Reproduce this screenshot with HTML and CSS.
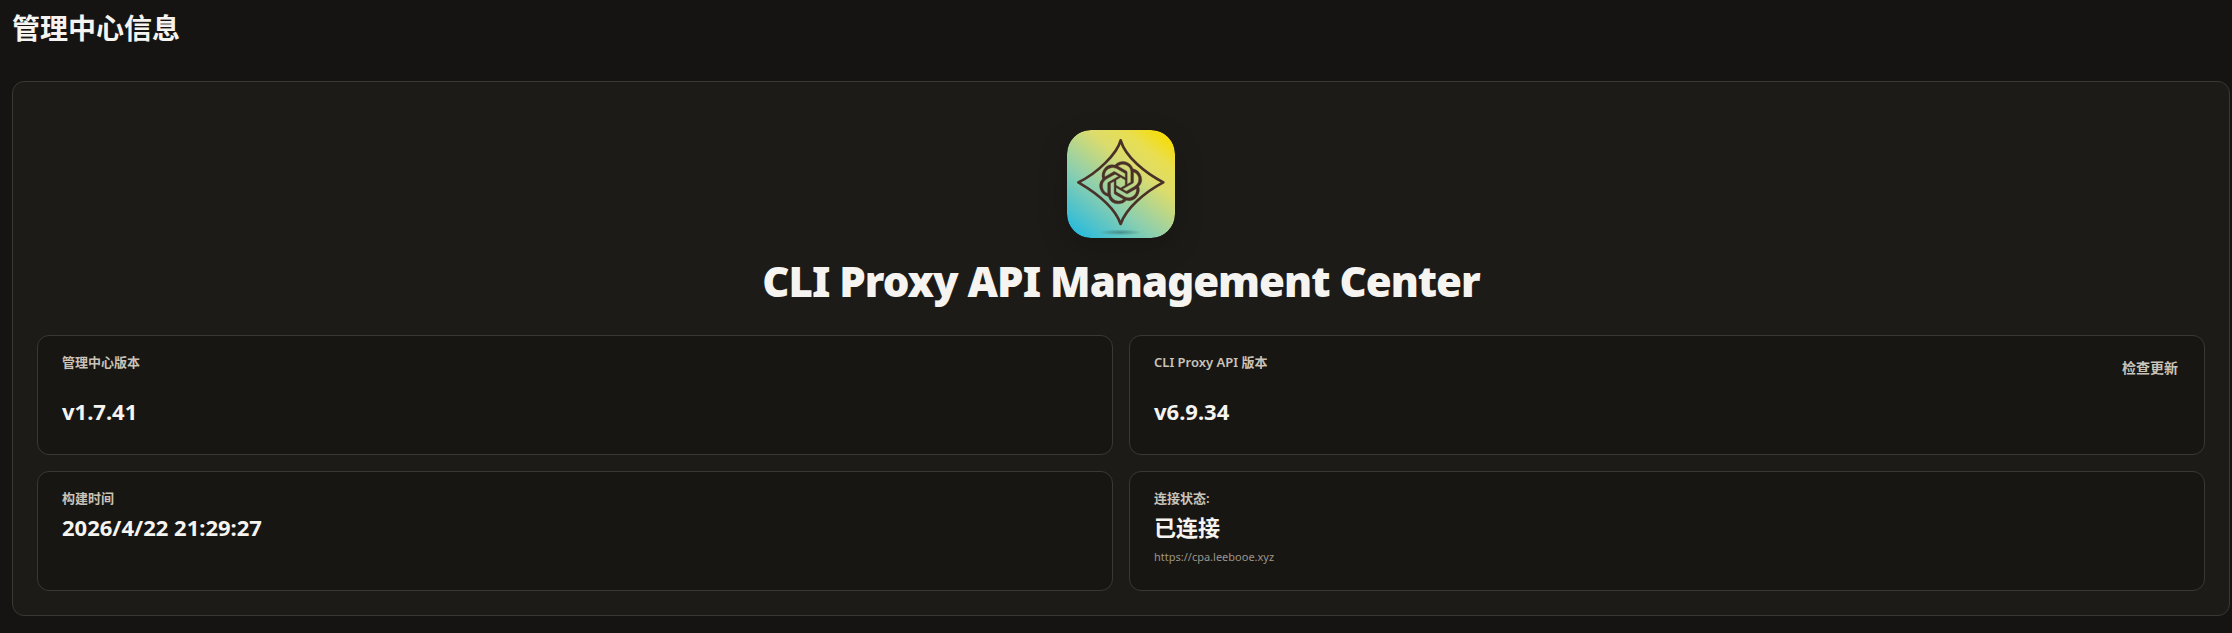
FILE: index.html
```
<!DOCTYPE html>
<html lang="zh-CN">
<head>
    <meta charset="UTF-8">
    <meta name="viewport" content="width=device-width, initial-scale=1.0">
    <title>CLI Proxy API Management Center</title>
    <link rel="stylesheet" href="styles.css">
</head>
<body>
    <main class="page">
        <h1 class="page-title">管理中心信息</h1>

        <section class="about-card">
            <div class="hero">
                <svg class="logo" viewBox="0 0 324 324" aria-hidden="true">
                    <defs>
                        <linearGradient id="bg" x1="0.1" y1="1" x2="0.9" y2="0">
                            <stop offset="0.02" stop-color="#2bbbdc"/>
                            <stop offset="0.36" stop-color="#8dcfae"/>
                            <stop offset="0.66" stop-color="#dcdc6c"/>
                            <stop offset="0.82" stop-color="#e8de50"/>
                            <stop offset="0.96" stop-color="#f5dd0e"/>
                        </linearGradient>
                        <radialGradient id="ground">
                            <stop offset="0" stop-color="#3b7a78" stop-opacity="0.75"/>
                            <stop offset="1" stop-color="#3b7a78" stop-opacity="0"/>
                        </radialGradient>
                    </defs>
                    <rect width="324" height="324" rx="72" fill="url(#bg)"/>
                    <ellipse cx="160" cy="307" rx="66" ry="9" fill="url(#ground)"/>
                    <path d="M161 31C150 72 90 130 34 157C90 190 145 235 161 282C177 235 235 185 289 157C235 130 175 80 161 31Z" fill="none" stroke="#4a3128" stroke-width="8" stroke-linejoin="round"/>
                    <g transform="translate(161 158) scale(-5.3 5.3) translate(-12 -12)">
                        <path fill="#4a3128" stroke="#4a3128" stroke-width="0.2" d="M22.2819 9.8211a5.9847 5.9847 0 0 0-.5157-4.9108 6.0462 6.0462 0 0 0-6.5098-2.9A6.0651 6.0651 0 0 0 4.9807 4.1818a5.9847 5.9847 0 0 0-3.9977 2.9 6.0462 6.0462 0 0 0 .7427 7.0966 5.98 5.98 0 0 0 .511 4.9107 6.051 6.051 0 0 0 6.5146 2.9001A5.9847 5.9847 0 0 0 13.2599 24a6.0557 6.0557 0 0 0 5.7718-4.2058 5.9894 5.9894 0 0 0 3.9977-2.9001 6.0557 6.0557 0 0 0-.7475-7.0729zm-9.022 12.6081a4.4755 4.4755 0 0 1-2.8764-1.0408l.1419-.0804 4.7783-2.7582a.7948.7948 0 0 0 .3927-.6813v-6.7369l2.02 1.1686a.071.071 0 0 1 .038.052v5.5826a4.504 4.504 0 0 1-4.4945 4.4944zm-9.6607-4.1254a4.4708 4.4708 0 0 1-.5346-3.0137l.142.0852 4.783 2.7582a.7712.7712 0 0 0 .7806 0l5.8428-3.3685v2.3324a.0804.0804 0 0 1-.0332.0615L9.74 19.9502a4.4992 4.4992 0 0 1-6.1408-1.6464zM2.3408 7.8956a4.485 4.485 0 0 1 2.3655-1.9728V11.6a.7664.7664 0 0 0 .3879.6765l5.8144 3.3543-2.0201 1.1685a.0757.0757 0 0 1-.071 0l-4.8303-2.7865A4.504 4.504 0 0 1 2.3408 7.872zm16.5963 3.8558L13.1038 8.364 15.1192 7.2a.0757.0757 0 0 1 .071 0l4.8303 2.7913a4.4944 4.4944 0 0 1-.6765 8.1042v-5.6772a.79.79 0 0 0-.407-.667zm2.0107-3.0231l-.142-.0852-4.7735-2.7818a.7759.7759 0 0 0-.7854 0L9.409 9.2297V6.8974a.0662.0662 0 0 1 .0284-.0615l4.8303-2.7866a4.4992 4.4992 0 0 1 6.6802 4.66zM8.3065 12.863l-2.02-1.1638a.0804.0804 0 0 1-.038-.0567V6.0742a4.4992 4.4992 0 0 1 7.3757-3.4537l-.142.0805L8.704 5.459a.7948.7948 0 0 0-.3927.6813zm1.0976-2.3654l2.602-1.4998 2.6069 1.4998v2.9994l-2.5974 1.4997-2.6067-1.4997Z"/>
                    </g>
                </svg>
                <h2 class="hero-title">CLI Proxy API Management Center</h2>
            </div>

            <div class="info-grid">
                <div class="tile">
                    <div class="tile-head">
                        <span class="tile-label">管理中心版本</span>
                    </div>
                    <div class="tile-value">v1.7.41</div>
                </div>
                <div class="tile">
                    <div class="tile-head">
                        <span class="tile-label">CLI Proxy API 版本</span>
                        <button type="button" class="btn-ghost">检查更新</button>
                    </div>
                    <div class="tile-value">v6.9.34</div>
                </div>
                <div class="tile">
                    <div class="tile-label">构建时间</div>
                    <div class="tile-value">2026/4/22 21:29:27</div>
                </div>
                <div class="tile">
                    <div class="tile-label">连接状态:</div>
                    <div class="tile-value">已连接</div>
                    <div class="tile-sub">https://cpa.leebooe.xyz</div>
                </div>
            </div>
        </section>
    </main>
</body>
</html>
```

FILE: styles.css
```
* {
    box-sizing: border-box;
}
body {
    margin: 0;
    background-color: #151412;
    color: #f6f4f1;
    font-family: "Noto Sans", "Noto Sans CJK SC", sans-serif;
}
.page {
    padding: 8px 2px 16px 12px;
}
.page-title {
    margin: 0 0 32px;
    font-size: 28px;
    line-height: 41px;
    font-weight: 700;
}
.about-card {
    padding: 48px 24px 24px;
    background-color: #1d1b18;
    border: 1px solid #3a3833;
    border-radius: 12px;
}
.hero {
    display: flex;
    flex-direction: column;
    align-items: center;
    gap: 16px;
    margin-bottom: 28px;
}
.logo {
    display: block;
    width: 108px;
    height: 108px;
    border-radius: 24px;
    box-shadow: 0 10px 30px rgba(0, 0, 0, 0.2);
}
.hero-title {
    margin: 0;
    font-size: 42px;
    line-height: 53px;
    font-weight: 900;
    letter-spacing: -1px;
}
.info-grid {
    display: grid;
    grid-template-columns: repeat(2, 1fr);
    gap: 16px;
}
.tile {
    display: flex;
    flex-direction: column;
    gap: 4px;
    min-height: 120px;
    padding: 16px 24px;
    background-color: #171613;
    border: 1px solid #3a3833;
    border-radius: 12px;
}
.tile-head {
    display: flex;
    justify-content: space-between;
    align-items: flex-start;
    min-height: 40px;
}
.tile-label {
    font-size: 13px;
    line-height: 20px;
    font-weight: 600;
    color: #c9c3b8;
}
.tile-value {
    font-size: 22px;
    line-height: 31px;
    font-weight: 700;
}
.tile-sub {
    font-size: 11px;
    line-height: 20px;
    color: #9c958a;
}
.btn-ghost {
    padding: 4px 2px;
    border: none;
    background: none;
    color: #c9c3b8;
    font: inherit;
    font-size: 14px;
    line-height: 24px;
    font-weight: 600;
    cursor: pointer;
}
```
